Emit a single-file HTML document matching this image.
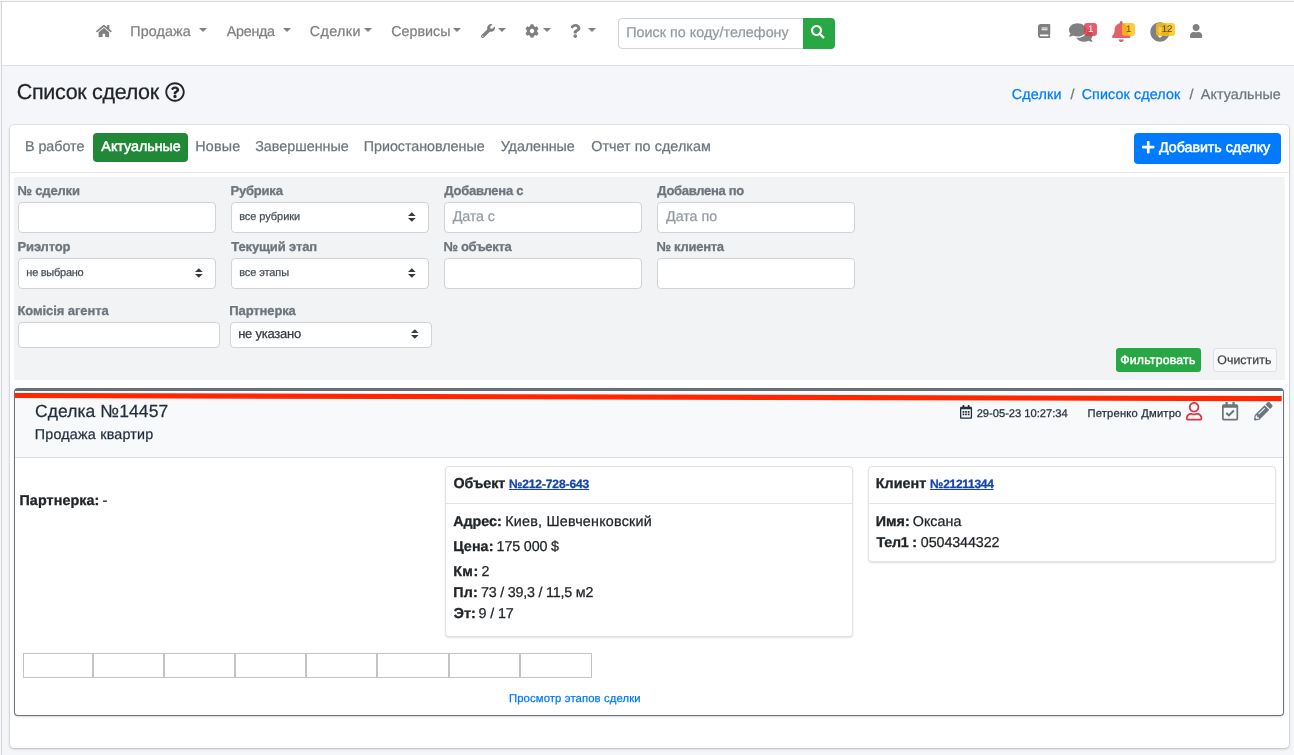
<!DOCTYPE html>
<html lang="ru"><head><meta charset="utf-8"><title>Список сделок</title>
<style>
html,body{margin:0;padding:0}
body{width:1294px;height:755px;overflow:hidden;background:#f4f6f9;font-family:"Liberation Sans",sans-serif;position:relative}
.i{position:absolute;display:block;overflow:visible}
.t{margin:0;-webkit-text-stroke:0.25px;text-rendering:geometricPrecision;position:absolute;white-space:nowrap;line-height:1;padding:0;display:block;text-decoration-thickness:1px}
.b{position:absolute;box-sizing:border-box}
a.t{text-decoration:none}
a.t.u{text-decoration:underline}
nav,header,main,section,form{display:contents}
.inp{position:absolute;box-sizing:border-box;background:#fff;border:1px solid #ced4da;border-radius:4px}
.card{position:absolute;box-sizing:border-box;background:#fff;border-radius:4px;box-shadow:0 0 1px rgba(0,0,0,.125),0 1px 3px rgba(0,0,0,.2)}
.caret{position:absolute;width:0;height:0;border-top:4.3px solid #808080;border-left:4.3px solid transparent;border-right:4.3px solid transparent}
.badge{position:absolute;box-sizing:border-box;border-radius:3px;opacity:.8}
.st{position:absolute;box-sizing:border-box;border:1px solid #c4c4c4;background:#fff}
#w{position:absolute;left:0;top:0;width:1294px;height:755px;will-change:transform}
</style></head><body><div id="w">

<div class="b" style="left:0;top:0;width:1294px;height:2px;background:#f7f7f7"></div>
<div class="b" style="left:0;top:0;width:2px;height:755px;background:#f7f7f7"></div>
<nav>
<div class="b" style="left:2px;top:2px;width:1292px;height:64px;background:#fff;border-bottom:1px solid #dee2e6"></div>
<div class="b" style="left:0;top:1px;width:1294px;height:1px;background:#d9d9d9"></div>
<div class="b" style="left:1px;top:1px;width:1px;height:754px;background:#d6d6d6"></div>
<svg class="i" style="left:96px;top:24px;width:15.75px;height:14px;" viewBox="0 0 576 512"><path fill="#808080" transform="translate(0,448) scale(1,-1)" d="M280.37 299.74c2.09082 1.68555 4.76562 2.69434 7.6582 2.69434s5.55078 -1.00879 7.6416 -2.69434l184.33 -151.74v-164c0 -8.83105 -7.16895 -16 -16 -16l-112.02 0.30957c-8.83105 0 -16.001 7.16895 -16.001 15.999c0 0.0175781 0 0.0341797 0.000976562 0.0517578 v95.6396c0 8.83105 -7.16992 16 -16 16h-64c-8.83105 0 -16 -7.16895 -16 -16v-95.71c0 -8.80371 -7.12695 -15.9561 -15.9209 -16l-112.06 -0.290039c-8.83105 0 -16 7.16895 -16 16v163.89zM571.6 196.53c2.70703 -2.20117 4.42578 -5.56152 4.42578 -9.31836 c0 -2.88867 -1.02246 -5.54004 -2.72559 -7.6123l-25.5 -31c-2.20117 -2.66309 -5.53418 -4.35059 -9.25684 -4.35059c-2.90332 0 -5.56641 1.0332 -7.64258 2.75098l-235.23 193.74c-2.09082 1.68555 -4.7666 2.69434 -7.6582 2.69434 c-2.89258 0 -5.55078 -1.00879 -7.6416 -2.69434l-235.22 -193.74c-2.0752 -1.71387 -4.73926 -2.75586 -7.63867 -2.75586c-3.73242 0 -7.07031 1.70898 -9.27148 4.38574l-25.5 31c-1.71875 2.07617 -2.7627 4.74414 -2.7627 7.64648 c0 3.72266 1.69824 7.05176 4.3623 9.25391l253.13 208.47c8.29102 6.82227 18.9668 10.9209 30.5312 10.9209s22.1787 -4.09863 30.4688 -10.9209l89.5303 -73.6602v72.6104c0 6.62305 5.37695 12 12 12h56c6.62305 0 12 -5.37695 12 -12v-138.51z"/></svg>
<a class="t" id="n1" style="left:130.24px;top:25px;font-size:14.3px;color:#808080;font-weight:400;letter-spacing:0.127px;">Продажа</a>
<div class="caret" style="left:199px;top:27.7px"></div>
<a class="t" id="n2" style="left:226.87px;top:25px;font-size:14.3px;color:#808080;font-weight:400;letter-spacing:-0.302px;">Аренда</a>
<div class="caret" style="left:282.5px;top:27.7px"></div>
<a class="t" id="n3" style="left:309.67px;top:25px;font-size:14.3px;color:#808080;font-weight:400;letter-spacing:0.421px;">Сделки</a>
<div class="caret" style="left:364px;top:27.7px"></div>
<a class="t" id="n4" style="left:391.17px;top:25px;font-size:14.3px;color:#808080;font-weight:400;letter-spacing:0.012px;">Сервисы</a>
<div class="caret" style="left:453px;top:27.7px"></div>
<svg class="i" style="left:480.5px;top:24px;width:14.00px;height:14px;" viewBox="0 0 512 512"><path fill="#808080" transform="translate(0,448) scale(1,-1)" d="M507.73 338.9c11.7891 -47.4102 -0.84082 -99.6602 -37.9102 -136.73c-39.9004 -39.9004 -97.25 -50.9297 -147.37 -34.2197l-213.21 -213.21c-24.9902 -24.9902 -65.5098 -24.9902 -90.5 0s-24.9902 65.5098 0 90.5l213.39 213.39 c-16.5 50.1006 -5.58984 107.561 34.0498 147.2c37.0303 37.0195 89.2002 49.6699 136.58 37.9297c9.08984 -2.25977 12.2803 -13.54 5.66016 -20.1602l-74.3604 -74.3594l11.3105 -67.8799l67.8799 -11.3105l74.3604 74.3604 c6.58008 6.58008 17.8799 3.51953 20.1201 -5.50977zM64 -24c13.25 0 24 10.75 24 24c0 13.2598 -10.75 24 -24 24s-24 -10.7402 -24 -24c0 -13.25 10.75 -24 24 -24z"/></svg>
<div class="caret" style="left:497.5px;top:27.7px"></div>
<svg class="i" style="left:524.9px;top:24px;width:14.00px;height:14px;" viewBox="0 0 512 512"><path fill="#808080" transform="translate(0,448) scale(1,-1)" d="M487.4 132.3c4.89941 -2.7998 7.09961 -8.59961 5.59961 -14.0996c-11.0996 -35.7002 -30 -67.9004 -54.7002 -94.6006c-3.7998 -4.19922 -9.89941 -5.09961 -14.7998 -2.2998l-42.5996 24.6006c-18 -15.3008 -38.6006 -27.2002 -60.8008 -35.1006v-49.2002 c0 -5.59961 -3.89941 -10.5 -9.39941 -11.6992c-34.9004 -7.80078 -72.5 -8.2002 -109.2 0c-5.5 1.19922 -9.40039 6.09961 -9.40039 11.6992v49.2002c-22.2998 7.7998 -42.8994 19.7002 -60.7998 35.1006l-42.5996 -24.6006c-4.7998 -2.7998 -11 -1.7998 -14.7998 2.2998 c-24.7002 26.8008 -43.6006 59 -54.7002 94.6006c-1.60059 5.39941 0.599609 11.2002 5.5 14l42.5996 24.5996c-4.2998 23.2002 -4.2998 47 0 70.2002l-42.5996 24.5996c-4.90039 2.80078 -7.2002 8.60059 -5.5 14c11.0996 35.7002 30 67.9004 54.7002 94.6006 c3.7998 4.2002 9.89941 5.09961 14.7998 2.2998l42.5 -24.5996c18 15.2998 38.5996 27.1992 60.7998 35.0996v49.2002c0 5.59961 3.90039 10.5 9.40039 11.7002c34.8994 7.7998 72.5 8.19922 109.199 0c5.5 -1.2002 9.40039 -6.10059 9.40039 -11.7002v-49.1006 c22.2998 -7.7998 42.9004 -19.6992 60.7998 -35.0996l42.6006 24.5996c4.7998 2.80078 11 1.80078 14.7998 -2.2998c24.7002 -26.7998 43.5996 -59 54.7002 -94.5996c1.59961 -5.40039 -0.600586 -11.2002 -5.5 -14l-42.6006 -24.6006 c4.2998 -23.1992 4.2998 -47 0 -70.1992zM256 112c44.0996 0 80 35.9004 80 80s-35.9004 80 -80 80s-80 -35.9004 -80 -80s35.9004 -80 80 -80z"/></svg>
<div class="caret" style="left:542.5px;top:27.7px"></div>
<svg class="i" style="left:570px;top:24px;width:10.50px;height:14px;" viewBox="0 0 384 512"><path fill="#808080" transform="translate(0,448) scale(1,-1)" d="M202.021 448c84.8809 0 175.482 -66.2559 175.481 -153.6c0 -115.982 -125.268 -117.768 -125.268 -160.627v-5.77344c0 -13.2549 -10.7451 -24 -24 -24h-72.4717c-13.2549 0 -24 10.7451 -24 24v9.78809c0 61.8291 46.876 86.5449 82.2998 106.405 c30.376 17.0293 48.9922 28.6113 48.9922 51.1641c0 29.832 -38.0518 49.6309 -68.8154 49.6309c-39.127 0 -57.708 -18.0684 -82.7568 -49.4492c-8.12109 -10.1738 -22.8809 -12.0127 -33.2529 -4.14844l-43.1387 32.709c-10.2705 7.78809 -12.541 22.2939 -5.17773 32.874 c40.5889 58.3232 92.2881 91.0264 172.107 91.0264zM192 74.541c38.1963 0 69.2715 -31.0742 69.2715 -69.2695c0 -38.1963 -31.0752 -69.2715 -69.2715 -69.2715s-69.2715 31.0752 -69.2715 69.2695c0 38.1963 31.0752 69.2715 69.2715 69.2715z"/></svg>
<div class="caret" style="left:587.5px;top:27.7px"></div>
<div class="inp" style="left:618px;top:18px;width:186px;height:30.5px;border-radius:4px 0 0 4px"></div>
<span class="t" id="srch" style="left:626.24px;top:26px;font-size:14.3px;color:#939ba2;font-weight:400;letter-spacing:0.037px;">Поиск по коду/телефону</span>
<div class="b" style="left:803px;top:18px;width:31.5px;height:30.5px;background:#28a745;border-radius:0 4px 4px 0"></div>
<svg class="i" style="left:811.3px;top:24.9px;width:13.60px;height:13.6px;" viewBox="0 0 512 512"><path fill="#fff" transform="translate(0,448) scale(1,-1)" d="M505 5.2998c9.2998 -9.39941 9.2998 -24.5996 -0.0996094 -34l-28.3008 -28.2998c-9.2998 -9.40039 -24.5 -9.40039 -33.8994 0l-99.7002 99.7002c-4.5 4.5 -7 10.5996 -7 17v16.2998c-35.2998 -27.5996 -79.7002 -44 -128 -44c-114.9 0 -208 93.0996 -208 208 s93.0996 208 208 208s208 -93.0996 208 -208c0 -48.2998 -16.4004 -92.7002 -44 -128h16.2998c6.40039 0 12.5 -2.5 17 -7zM208 112c70.7998 0 128 57.2998 128 128c0 70.7998 -57.2998 128 -128 128c-70.7998 0 -128 -57.2998 -128 -128c0 -70.7998 57.2998 -128 128 -128z "/></svg>
<svg class="i" style="left:1037.5px;top:24px;width:12.25px;height:14px;" viewBox="0 0 448 512"><path fill="#808080" transform="translate(0,448) scale(1,-1)" d="M448 88c0 -7.5 -3.5 -14.2998 -8.90039 -18.5996c-4.19922 -15.4004 -4.19922 -59.3008 0 -74.7002c5.40039 -4.40039 8.90039 -11.2002 8.90039 -18.7002v-16c0 -13.2998 -10.7002 -24 -24 -24h-328c-53 0 -96 43 -96 96v320c0 53 43 96 96 96h328 c13.2998 0 24 -10.7002 24 -24v-336zM128 314v-20c0 -3.2998 2.7002 -6 6 -6h212c3.2998 0 6 2.7002 6 6v20c0 3.2998 -2.7002 6 -6 6h-212c-3.2998 0 -6 -2.7002 -6 -6zM128 250v-20c0 -3.2998 2.7002 -6 6 -6h212c3.2998 0 6 2.7002 6 6v20c0 3.2998 -2.7002 6 -6 6h-212 c-3.2998 0 -6 -2.7002 -6 -6zM381.4 0c-1.90039 17.0996 -1.90039 46.9004 0 64h-285.4c-17.5996 0 -32 -14.4004 -32 -32c0 -17.7002 14.2998 -32 32 -32h285.4z"/></svg>
<svg class="i" style="left:1069px;top:21.5px;width:23.62px;height:21px;" viewBox="0 0 576 512"><path fill="#808080" transform="translate(0,448) scale(1,-1)" d="M416 256c0 -88.4004 -93.0996 -160 -208 -160c-41 0 -79.0996 9.2998 -111.3 25c-21.7998 -12.7002 -52.1006 -25 -88.7002 -25c-3.2002 0 -6 1.7998 -7.2998 4.7998s-0.700195 6.40039 1.5 8.7002c0.299805 0.299805 22.3994 24.2998 35.7998 54.5 c-23.9004 26.0996 -38 57.7002 -38 92c0 88.4004 93.0996 160 208 160s208 -71.5996 208 -160zM538 36c13.4004 -30.2998 35.5 -54.2002 35.7998 -54.5c2.2002 -2.40039 2.7998 -5.7998 1.5 -8.7002c-1.2002 -2.89941 -4.09961 -4.7998 -7.2998 -4.7998 c-36.5996 0 -66.9004 12.2998 -88.7002 25c-32.2002 -15.7998 -70.2998 -25 -111.3 -25c-86.2002 0 -160.2 40.4004 -191.7 97.9004c10.4004 -1.10059 20.9004 -1.90039 31.7002 -1.90039c132.3 0 240 86.0996 240 192c0 6.7998 -0.400391 13.5 -1.2998 20.0996 c75.7998 -23.8994 129.3 -81.1992 129.3 -148.1c0 -34.2998 -14.0996 -66 -38 -92z"/></svg>
<div class="badge" style="left:1084.2px;top:23px;width:12.8px;height:12.5px;background:#dc3545"></div>
<span class="t" id="b1" style="left:1087.97px;top:25px;font-size:9.6px;color:#fff;font-weight:400;letter-spacing:0px;opacity:.9;-webkit-text-stroke:0.05px">1</span>
<svg class="i" style="left:1112px;top:21.2px;width:18.38px;height:21px;" viewBox="0 0 448 512"><path fill="#e4606d" transform="translate(0,448) scale(1,-1)" d="M224 -64c-35.3203 0 -63.9697 28.6504 -63.9697 64h127.939c0 -35.3496 -28.6494 -64 -63.9697 -64zM439.39 85.71c6 -6.44043 8.66016 -14.1602 8.61035 -21.71c-0.0996094 -16.4004 -12.9805 -32 -32.0996 -32h-383.801c-19.1191 0 -31.9893 15.5996 -32.0996 32 c-0.0498047 7.5498 2.61035 15.2598 8.61035 21.71c19.3193 20.7598 55.4697 51.9902 55.4697 154.29c0 77.7002 54.4795 139.9 127.939 155.16v20.8398c0 17.6699 14.3203 32 31.9805 32s31.9805 -14.3301 31.9805 -32v-20.8398 c73.46 -15.2598 127.939 -77.46 127.939 -155.16c0 -102.3 36.1504 -133.53 55.4697 -154.29z"/></svg>
<div class="badge" style="left:1122.2px;top:23px;width:12.8px;height:12.5px;background:#ffc107"></div>
<span class="t" id="b2" style="left:1125.97px;top:25px;font-size:9.6px;color:#5b4d1c;font-weight:400;letter-spacing:0px;-webkit-text-stroke:0.05px">1</span>
<svg class="i" style="left:1149.9px;top:21.7px;width:20.00px;height:20px;" viewBox="0 0 512 512"><path fill="#808080" transform="translate(0,448) scale(1,-1)" d="M504 192c0 -136.997 -111.043 -248 -248 -248s-248 111.003 -248 248c0 136.917 111.043 248 248 248s248 -111.083 248 -248zM256 142c-25.4053 0 -46 -20.5947 -46 -46s20.5947 -46 46 -46s46 20.5947 46 46s-20.5947 46 -46 46zM212.327 307.346l7.41797 -136 c0.34668 -6.36328 5.6084 -11.3457 11.9814 -11.3457h48.5469c6.37305 0 11.6348 4.98242 11.9814 11.3457l7.41797 136c0.375 6.87402 -5.09766 12.6543 -11.9814 12.6543h-63.3838c-6.88379 0 -12.3555 -5.78027 -11.9805 -12.6543z"/></svg>
<div class="badge" style="left:1156px;top:23px;width:19px;height:12.5px;background:#ffc107"></div>
<span class="t" id="b3" style="left:1161.67px;top:25px;font-size:9.6px;color:#5b4d1c;font-weight:400;letter-spacing:0px;-webkit-text-stroke:0.05px">12</span>
<svg class="i" style="left:1190px;top:24px;width:12.25px;height:14px;" viewBox="0 0 448 512"><path fill="#808080" transform="translate(0,448) scale(1,-1)" d="M224 192c-70.7002 0 -128 57.2998 -128 128s57.2998 128 128 128s128 -57.2998 128 -128s-57.2998 -128 -128 -128zM313.6 160c74.2002 0 134.4 -60.2002 134.4 -134.4v-41.5996c0 -26.5 -21.5 -48 -48 -48h-352c-26.5 0 -48 21.5 -48 48v41.5996 c0 74.2002 60.2002 134.4 134.4 134.4h16.6992c22.3008 -10.2002 46.9004 -16 72.9004 -16s50.7002 5.7998 72.9004 16h16.6992z"/></svg>
</nav>
<header>
<h1 class="t" id="title" style="left:16.81px;top:82px;font-size:21.5px;color:#212529;font-weight:400;letter-spacing:-0.32px;">Список сделок</h1>
<svg class="i" style="left:164.8px;top:82px;width:20.00px;height:20px;" viewBox="0 0 512 512"><path fill="#212529" transform="translate(0,448) scale(1,-1)" d="M256 440c136.957 0 248 -111.083 248 -248c0 -136.997 -111.043 -248 -248 -248s-248 111.003 -248 248c0 136.917 111.043 248 248 248zM256 -8c110.569 0 200 89.4697 200 200c0 110.529 -89.5088 200 -200 200c-110.528 0 -200 -89.5049 -200 -200 c0 -110.569 89.4678 -200 200 -200zM363.244 247.2c0 -67.0518 -72.4209 -68.084 -72.4209 -92.8633v-6.33691c0 -6.62695 -5.37305 -12 -12 -12h-45.6475c-6.62695 0 -12 5.37305 -12 12v8.65918c0 35.7451 27.1006 50.0342 47.5791 61.5156 c17.5615 9.84473 28.3242 16.541 28.3242 29.5791c0 17.2461 -21.999 28.6934 -39.7842 28.6934c-23.1885 0 -33.8936 -10.9775 -48.9424 -29.9697c-4.05664 -5.11914 -11.46 -6.07031 -16.666 -2.12402l-27.8232 21.0986 c-5.10742 3.87207 -6.25098 11.0654 -2.64453 16.3633c23.627 34.6934 53.7217 54.1846 100.575 54.1846c49.0713 0 101.45 -38.3037 101.45 -88.7998zM298 80c0 -23.1592 -18.8408 -42 -42 -42s-42 18.8408 -42 42s18.8408 42 42 42s42 -18.8408 42 -42z"/></svg>
<a class="t" id="bc1" style="left:1011.67px;top:88px;font-size:14.3px;color:#007bff;font-weight:400;letter-spacing:0.221px;">Сделки</a>
<span class="t" id="bcs1" style="left:1070.4px;top:88px;font-size:14.3px;color:#6c757d;font-weight:400;letter-spacing:0px;">/</span>
<a class="t" id="bc2" style="left:1081.67px;top:88px;font-size:14.3px;color:#007bff;font-weight:400;letter-spacing:0.114px;">Список сделок</a>
<span class="t" id="bcs2" style="left:1189.4px;top:88px;font-size:14.3px;color:#6c757d;font-weight:400;letter-spacing:0px;">/</span>
<span class="t" id="bc3" style="left:1200.87px;top:88px;font-size:14.3px;color:#6c757d;font-weight:400;letter-spacing:0.044px;">Актуальные</span>
</header>
<main>
<div class="card" style="left:10px;top:125px;width:1279px;height:623px;box-shadow:0 0 0 1px rgba(0,0,0,.05),0 0 1px rgba(0,0,0,.125),0 1px 3px rgba(0,0,0,.2)"></div>
<div class="b" style="left:10px;top:172px;width:1278.5px;height:1px;background:#e6e6e6"></div>
<a class="t" id="p1" style="left:24.93px;top:140px;font-size:14.3px;color:#6c757d;font-weight:400;letter-spacing:-0.022px;">В работе</a>
<div class="b" style="left:93px;top:133px;width:94.7px;height:29px;background:#218838;border-radius:4px"></div>
<a class="t" id="p2" style="left:101.37px;top:140px;font-size:14.3px;color:#fff;font-weight:400;letter-spacing:-0.012px;-webkit-text-stroke:0.5px">Актуальные</a>
<a class="t" id="p3" style="left:195.23px;top:140px;font-size:14.3px;color:#6c757d;font-weight:400;letter-spacing:0.2px;">Новые</a>
<a class="t" id="p4" style="left:255.23px;top:140px;font-size:14.3px;color:#6c757d;font-weight:400;letter-spacing:0.016px;">Завершенные</a>
<a class="t" id="p5" style="left:363.74px;top:140px;font-size:14.3px;color:#6c757d;font-weight:400;letter-spacing:-0.022px;">Приостановленые</a>
<a class="t" id="p6" style="left:500.72px;top:140px;font-size:14.3px;color:#6c757d;font-weight:400;letter-spacing:-0.073px;">Удаленные</a>
<a class="t" id="p7" style="left:591.22px;top:140px;font-size:14.3px;color:#6c757d;font-weight:400;letter-spacing:0.078px;">Отчет по сделкам</a>
<div class="b" style="left:1133.7px;top:133px;width:147px;height:31px;background:#007bff;border-radius:4px"></div>
<svg class="i" style="left:1142.3px;top:139.8px;width:12.51px;height:14.3px;" viewBox="0 0 448 512"><path fill="#fff" transform="translate(0,448) scale(1,-1)" d="M416 240c17.6699 0 32 -14.3301 32 -32v-32c0 -17.6699 -14.3301 -32 -32 -32h-144v-144c0 -17.6699 -14.3301 -32 -32 -32h-32c-17.6699 0 -32 14.3301 -32 32v144h-144c-17.6699 0 -32 14.3301 -32 32v32c0 17.6699 14.3301 32 32 32h144v144 c0 17.6699 14.3301 32 32 32h32c17.6699 0 32 -14.3301 32 -32v-144h144z"/></svg>
<span class="t" id="add" style="left:1159.0px;top:141px;font-size:14.3px;color:#fff;font-weight:400;letter-spacing:-0.057px;-webkit-text-stroke:0.5px">Добавить сделку</span>
<form>
<div class="b" style="left:14px;top:177px;width:1271px;height:202.5px;background:#f2f3f4"></div>
<label class="t" id="l1" style="left:17.53px;top:184px;font-size:13px;color:#6c757d;font-weight:700;letter-spacing:-0.172px;-webkit-text-stroke:0.3px;">№ сделки</label>
<div class="inp" style="left:18.2px;top:202px;width:197.5px;height:31px"></div>
<label class="t" id="l2" style="left:230.53px;top:184px;font-size:13px;color:#6c757d;font-weight:700;letter-spacing:-0.202px;-webkit-text-stroke:0.3px;">Рубрика</label>
<div class="inp" style="left:231.2px;top:202px;width:197.5px;height:31px"></div>
<label class="t" id="l3" style="left:444.29px;top:184px;font-size:13px;color:#6c757d;font-weight:700;letter-spacing:-0.247px;-webkit-text-stroke:0.3px;">Добавлена с</label>
<div class="inp" style="left:444.2px;top:202px;width:197.5px;height:31px"></div>
<label class="t" id="l4" style="left:657.29px;top:184px;font-size:13px;color:#6c757d;font-weight:700;letter-spacing:-0.292px;-webkit-text-stroke:0.3px;">Добавлена по</label>
<div class="inp" style="left:657.2px;top:202px;width:197.5px;height:31px"></div>
<label class="t" id="l5" style="left:17.53px;top:240px;font-size:13px;color:#6c757d;font-weight:700;letter-spacing:-0.141px;-webkit-text-stroke:0.3px;">Риэлтор</label>
<div class="inp" style="left:18.2px;top:258px;width:197.5px;height:31px"></div>
<label class="t" id="l6" style="left:231.25px;top:240px;font-size:13px;color:#6c757d;font-weight:700;letter-spacing:-0.131px;-webkit-text-stroke:0.3px;">Текущий этап</label>
<div class="inp" style="left:231.2px;top:258px;width:197.5px;height:31px"></div>
<label class="t" id="l7" style="left:443.53px;top:240px;font-size:13px;color:#6c757d;font-weight:700;letter-spacing:-0.312px;-webkit-text-stroke:0.3px;">№ объекта</label>
<div class="inp" style="left:444.2px;top:258px;width:197.5px;height:31px"></div>
<label class="t" id="l8" style="left:656.53px;top:240px;font-size:13px;color:#6c757d;font-weight:700;letter-spacing:-0.269px;-webkit-text-stroke:0.3px;">№ клиента</label>
<div class="inp" style="left:657.2px;top:258px;width:197.5px;height:31px"></div>
<span class="t" id="s1" style="left:239.14px;top:212px;font-size:11px;color:#495057;font-weight:400;letter-spacing:-0.053px;">все рубрики</span>
<svg class="i" style="left:408px;top:211.5px;width:7.6px;height:10px" viewBox="0 0 4 5"><path fill="#343a40" d="M2 0L0 2h4zm0 5L0 3h4z"/></svg>
<span class="t" id="s2" style="left:26.34px;top:268px;font-size:11px;color:#495057;font-weight:400;letter-spacing:-0.267px;">не выбрано</span>
<svg class="i" style="left:195px;top:267.5px;width:7.6px;height:10px" viewBox="0 0 4 5"><path fill="#343a40" d="M2 0L0 2h4zm0 5L0 3h4z"/></svg>
<span class="t" id="s3" style="left:239.14px;top:268px;font-size:11px;color:#495057;font-weight:400;letter-spacing:-0.09px;">все этапы</span>
<svg class="i" style="left:408px;top:267.5px;width:7.6px;height:10px" viewBox="0 0 4 5"><path fill="#343a40" d="M2 0L0 2h4zm0 5L0 3h4z"/></svg>
<span class="t" id="ph1" style="left:452.8px;top:210px;font-size:14.3px;color:#939ba2;font-weight:400;letter-spacing:-0.136px;">Дата с</span>
<span class="t" id="ph2" style="left:666.0px;top:210px;font-size:14.3px;color:#939ba2;font-weight:400;letter-spacing:-0.034px;">Дата по</span>
<label class="t" id="l9" style="left:17.53px;top:304px;font-size:13px;color:#6c757d;font-weight:700;letter-spacing:-0.083px;-webkit-text-stroke:0.3px;">Комісія агента</label>
<div class="inp" style="left:18px;top:322px;width:201.5px;height:26px"></div>
<label class="t" id="l10" style="left:229.33px;top:304px;font-size:13px;color:#6c757d;font-weight:700;letter-spacing:-0.119px;-webkit-text-stroke:0.3px;">Партнерка</label>
<div class="inp" style="left:230px;top:322px;width:201.5px;height:26px"></div>
<span class="t" id="s4" style="left:238.2px;top:327px;font-size:13px;color:#343a40;font-weight:400;letter-spacing:-0.243px;">не указано</span>
<svg class="i" style="left:411px;top:329.2px;width:7.6px;height:10px" viewBox="0 0 4 5"><path fill="#343a40" d="M2 0L0 2h4zm0 5L0 3h4z"/></svg>
<div class="b" style="left:1115.7px;top:348px;width:85px;height:24px;background:#28a745;border-radius:3px"></div>
<span class="t" id="fb" style="left:1120.29px;top:354px;font-size:12.3px;color:#fff;font-weight:400;letter-spacing:0.187px;-webkit-text-stroke:0.45px">Фильтровать</span>
<div class="b" style="left:1213px;top:348px;width:64px;height:24px;background:#f8f9fa;border:1px solid #e0e0e2;border-radius:3px"></div>
<span class="t" id="cb" style="left:1217.32px;top:354px;font-size:12.3px;color:#444;font-weight:400;letter-spacing:0.064px;">Очистить</span>
</form>
<section>
<div class="b" style="left:14px;top:388px;width:1270px;height:328px;background:#fff;border:1px solid #6c737b;border-top:3px solid #696f78;border-radius:4px;box-shadow:0 1px 2px rgba(0,0,0,.15)"></div>
<div class="b" style="left:15px;top:391px;width:1268px;height:67px;background:#f8f9fa;border-bottom:1px solid #dcdddf"></div>
<svg class="i" style="left:15px;top:388px;width:1268px;height:20px;overflow:hidden" viewBox="0 0 1268 20"><line x1="-3" y1="7.5" x2="1266.7" y2="10.6" stroke="#ff2600" stroke-width="5.1"/></svg>
<h5 class="t" id="dt" style="left:35.01px;top:403px;font-size:17.5px;color:#1f2d3d;font-weight:400;letter-spacing:0.074px;">Сделка №14457</h5>
<span class="t" id="ds" style="left:34.74px;top:428px;font-size:14.3px;color:#1f2d3d;font-weight:400;letter-spacing:0.224px;">Продажа квартир</span>
<svg class="i" style="left:960.1px;top:404.9px;width:12.08px;height:13.8px;" viewBox="0 0 448 512"><path fill="#1f2d3d" transform="translate(0,448) scale(1,-1)" d="M148 160h-40c-6.59961 0 -12 5.40039 -12 12v40c0 6.59961 5.40039 12 12 12h40c6.59961 0 12 -5.40039 12 -12v-40c0 -6.59961 -5.40039 -12 -12 -12zM256 172c0 -6.59961 -5.40039 -12 -12 -12h-40c-6.59961 0 -12 5.40039 -12 12v40c0 6.59961 5.40039 12 12 12h40 c6.59961 0 12 -5.40039 12 -12v-40zM352 172c0 -6.59961 -5.40039 -12 -12 -12h-40c-6.59961 0 -12 5.40039 -12 12v40c0 6.59961 5.40039 12 12 12h40c6.59961 0 12 -5.40039 12 -12v-40zM256 76c0 -6.59961 -5.40039 -12 -12 -12h-40c-6.59961 0 -12 5.40039 -12 12v40 c0 6.59961 5.40039 12 12 12h40c6.59961 0 12 -5.40039 12 -12v-40zM160 76c0 -6.59961 -5.40039 -12 -12 -12h-40c-6.59961 0 -12 5.40039 -12 12v40c0 6.59961 5.40039 12 12 12h40c6.59961 0 12 -5.40039 12 -12v-40zM352 76c0 -6.59961 -5.40039 -12 -12 -12h-40 c-6.59961 0 -12 5.40039 -12 12v40c0 6.59961 5.40039 12 12 12h40c6.59961 0 12 -5.40039 12 -12v-40zM448 336v-352c0 -26.5 -21.5 -48 -48 -48h-352c-26.5 0 -48 21.5 -48 48v352c0 26.5 21.5 48 48 48h48v52c0 6.59961 5.40039 12 12 12h40 c6.59961 0 12 -5.40039 12 -12v-52h128v52c0 6.59961 5.40039 12 12 12h40c6.59961 0 12 -5.40039 12 -12v-52h48c26.5 0 48 -21.5 48 -48zM400 -10v298h-352v-298c0 -3.2998 2.7002 -6 6 -6h340c3.2998 0 6 2.7002 6 6z"/></svg>
<span class="t" id="dd" style="left:976.64px;top:409px;font-size:11.2px;color:#1f2d3d;font-weight:400;letter-spacing:-0.022px;">29-05-23 10:27:34</span>
<span class="t" id="du" style="left:1087.49px;top:409px;font-size:11.2px;color:#1f2d3d;font-weight:400;letter-spacing:0.197px;">Петренко Дмитро</span>
<svg class="i" style="left:1185.7px;top:402px;width:16.19px;height:18.5px;" viewBox="0 0 448 512"><path fill="#dc3545" transform="translate(0,448) scale(1,-1)" d="M313.6 144c74.2002 0 134.4 -60.2002 134.4 -134.4v-25.5996c0 -26.5 -21.5 -48 -48 -48h-352c-26.5 0 -48 21.5 -48 48v25.5996c0 74.2002 60.2002 134.4 134.4 134.4c28.7998 0 42.5 -16 89.5996 -16s60.9004 16 89.5996 16zM400 -16v25.5996 c0 47.6006 -38.7998 86.4004 -86.4004 86.4004c-14.6992 0 -37.8994 -16 -89.5996 -16c-51.2998 0 -75 16 -89.5996 16c-47.6006 0 -86.4004 -38.7998 -86.4004 -86.4004v-25.5996h352zM224 160c-79.5 0 -144 64.5 -144 144s64.5 144 144 144s144 -64.5 144 -144 s-64.5 -144 -144 -144zM224 400c-52.9004 0 -96 -43.0996 -96 -96s43.0996 -96 96 -96s96 43.0996 96 96s-43.0996 96 -96 96z"/></svg>
<svg class="i" style="left:1221.7px;top:402px;width:16.19px;height:18.5px;" viewBox="0 0 448 512"><path fill="#6c757d" transform="translate(0,448) scale(1,-1)" d="M400 384c26.5098 0 48 -21.4902 48 -48v-352c0 -26.5098 -21.4902 -48 -48 -48h-352c-26.5098 0 -48 21.4902 -48 48v352c0 26.5098 21.4902 48 48 48h48v52c0 6.62695 5.37305 12 12 12h40c6.62695 0 12 -5.37305 12 -12v-52h128v52c0 6.62695 5.37305 12 12 12h40 c6.62695 0 12 -5.37305 12 -12v-52h48zM394 -16c3.31152 0 6 2.68848 6 6v298h-352v-298c0 -3.31152 2.68848 -6 6 -6h340zM341.151 184.65l-142.31 -141.169c-4.70508 -4.66699 -12.3027 -4.6377 -16.9707 0.0673828l-75.0908 75.6992 c-4.66699 4.70508 -4.6377 12.3027 0.0673828 16.9707l22.7197 22.5361c4.70508 4.66699 12.3027 4.63672 16.9697 -0.0693359l44.1035 -44.4609l111.072 110.182c4.70508 4.66699 12.3027 4.63672 16.9707 -0.0683594l22.5361 -22.7178 c4.66699 -4.70508 4.63672 -12.3027 -0.0683594 -16.9697z"/></svg>
<svg class="i" style="left:1254px;top:402px;width:18.50px;height:18.5px;" viewBox="0 0 512 512"><path fill="#6c757d" transform="translate(0,448) scale(1,-1)" d="M497.9 305.9l-46.1006 -46.1006c-4.7002 -4.7002 -12.2998 -4.7002 -17 0l-111 111c-4.7002 4.7002 -4.7002 12.2998 0 17l46.1006 46.1006c18.6992 18.6992 49.0996 18.6992 67.8994 0l60.1006 -60.1006c18.7998 -18.7002 18.7998 -49.0996 0 -67.8994zM284.2 348.2 c4.7002 4.7002 12.2998 4.7002 17.0996 0l111 -111c4.7002 -4.7002 4.7002 -12.2998 0 -17l-262.6 -262.601l-121.5 -21.2998c-16.4004 -2.7998 -30.7002 11.4004 -27.7998 27.7998l21.1992 121.5zM124.1 108.1c5.5 -5.5 14.3008 -5.5 19.8008 0l154 154 c5.5 5.5 5.5 14.3008 0 19.8008s-14.3008 5.5 -19.8008 0l-154 -154c-5.5 -5.5 -5.5 -14.3008 0 -19.8008zM88 24v48h-36.2998l-11.2998 -64.5l31.0996 -31.0996l64.5 11.2998v36.2998h-48z"/></svg>
<span class="t" id="pt" style="left:19.44px;top:494px;font-size:14.3px;color:#212529;font-weight:700;letter-spacing:0.107px;-webkit-text-stroke:0.3px;">Партнерка:</span>
<span class="t" id="pt2" style="left:102.56px;top:494px;font-size:14.3px;color:#212529;font-weight:400;letter-spacing:0px;">-</span>
<div class="card" style="left:444.5px;top:465.5px;width:408.5px;height:171.5px;border:1px solid #e2e3e5;box-shadow:0 1px 2px rgba(0,0,0,.13)"></div>
<div class="b" style="left:445.5px;top:503px;width:406.5px;height:1px;background:#e3e3e3"></div>
<span class="t" id="o1" style="left:453.51px;top:477px;font-size:14.3px;color:#212529;font-weight:700;letter-spacing:-0.122px;-webkit-text-stroke:0.3px;">Объект</span>
<a class="t u" id="o2" style="left:508.9px;top:478px;font-size:12px;color:#1443ad;font-weight:700;letter-spacing:-0.1px;-webkit-text-stroke:0.3px;">№212-728-643</a>
<span class="t" id="o3" style="left:453.14px;top:515px;font-size:14.3px;color:#212529;font-weight:700;letter-spacing:0.005px;-webkit-text-stroke:0.3px;">Адрес:</span>
<span class="t" id="o3v" style="left:505.13px;top:515px;font-size:14.3px;color:#212529;font-weight:400;letter-spacing:0.245px;">Киев, Шевченковский</span>
<span class="t" id="o4" style="left:453.14px;top:540px;font-size:14.3px;color:#212529;font-weight:700;letter-spacing:0.095px;-webkit-text-stroke:0.3px;">Цена:</span>
<span class="t" id="o4v" style="left:496.61px;top:540px;font-size:14.3px;color:#212529;font-weight:400;letter-spacing:-0.15px;">175 000 $</span>
<span class="t" id="o5" style="left:453.14px;top:565px;font-size:14.3px;color:#212529;font-weight:700;letter-spacing:0.5px;-webkit-text-stroke:0.3px;">Км:</span>
<span class="t" id="o5v" style="left:481.48px;top:565px;font-size:14.3px;color:#212529;font-weight:400;letter-spacing:0px;">2</span>
<span class="t" id="o6" style="left:453.14px;top:586px;font-size:14.3px;color:#212529;font-weight:700;letter-spacing:0.304px;-webkit-text-stroke:0.3px;">Пл:</span>
<span class="t" id="o6v" style="left:480.97px;top:586px;font-size:14.3px;color:#212529;font-weight:400;letter-spacing:-0.201px;">73 / 39,3 / 11,5 м2</span>
<span class="t" id="o7" style="left:453.72px;top:607px;font-size:14.3px;color:#212529;font-weight:700;letter-spacing:0.007px;-webkit-text-stroke:0.3px;">Эт:</span>
<span class="t" id="o7v" style="left:478.53px;top:607px;font-size:14.3px;color:#212529;font-weight:400;letter-spacing:-0.098px;">9 / 17</span>
<div class="card" style="left:867.5px;top:465.5px;width:408px;height:96.3px;border:1px solid #e2e3e5;box-shadow:0 1px 2px rgba(0,0,0,.13)"></div>
<div class="b" style="left:868.5px;top:503px;width:406px;height:1px;background:#e3e3e3"></div>
<span class="t" id="c1" style="left:875.74px;top:477px;font-size:14.3px;color:#212529;font-weight:700;letter-spacing:0.052px;-webkit-text-stroke:0.3px;">Клиент</span>
<a class="t u" id="c2" style="left:930.1px;top:478px;font-size:12px;color:#1443ad;font-weight:700;letter-spacing:-0.288px;-webkit-text-stroke:0.3px;">№21211344</a>
<span class="t" id="c3" style="left:875.75px;top:515px;font-size:14.3px;color:#212529;font-weight:700;letter-spacing:-0.012px;-webkit-text-stroke:0.3px;">Имя:</span>
<span class="t" id="c3v" style="left:912.72px;top:515px;font-size:14.3px;color:#212529;font-weight:400;letter-spacing:0.049px;">Оксана</span>
<span class="t" id="c4" style="left:876.54px;top:536px;font-size:14.3px;color:#212529;font-weight:700;letter-spacing:-0.265px;-webkit-text-stroke:0.3px;">Тел1 :</span>
<span class="t" id="c4v" style="left:920.84px;top:536px;font-size:14.3px;color:#212529;font-weight:400;letter-spacing:-0.095px;">0504344322</span>
<div class="st" style="left:23px;top:653px;width:70px;height:25px"></div>
<div class="st" style="left:93px;top:653px;width:71px;height:25px"></div>
<div class="st" style="left:164px;top:653px;width:71px;height:25px"></div>
<div class="st" style="left:235px;top:653px;width:71px;height:25px"></div>
<div class="st" style="left:306px;top:653px;width:71px;height:25px"></div>
<div class="st" style="left:377px;top:653px;width:72px;height:25px"></div>
<div class="st" style="left:449px;top:653px;width:71px;height:25px"></div>
<div class="st" style="left:520px;top:653px;width:72px;height:25px"></div>
<a class="t" id="vs" style="left:508.98px;top:694px;font-size:11.3px;color:#007bff;font-weight:400;letter-spacing:0.117px;">Просмотр этапов сделки</a>
</section>
</main>
</div></body></html>
